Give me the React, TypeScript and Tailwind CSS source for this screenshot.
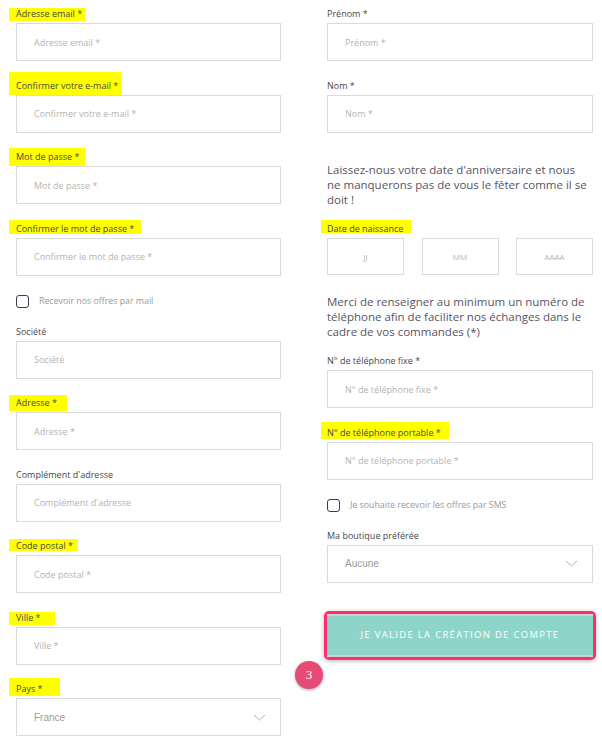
import React from 'react';

type FieldProps = { label: string; placeholder: string; hl?: string; last?: boolean };

function Label({ text, hl }: { text: string; hl?: string }) {
  return (
    <div className="flex h-[23px] items-start pt-[8px] text-[9px] leading-[12px]">
      <span className="relative z-0 block text-[#484848]">
        {hl && <span className={`absolute -z-10 bg-[#ffff00] ${hl}`} />}
        {text}
      </span>
    </div>
  );
}

function Field({ label, placeholder, hl, last }: FieldProps) {
  return (
    <div className={last ? '' : 'h-[71.5px]'}>
      <Label text={label} hl={hl} />
      <input
        placeholder={placeholder}
        className="h-[38px] w-full border border-[#dadada] bg-white pl-[17px] text-[9px] outline-none placeholder:text-[#b3b3b3]"
      />
    </div>
  );
}

function SelectBox({ value }: { value: string }) {
  return (
    <div className="flex h-[38px] w-full items-center justify-between border border-[#dadada] bg-white pl-[17px] pr-[14px]">
      <span className="font-['Liberation_Sans',sans-serif] text-[10px] text-[#9a9a9a]">{value}</span>
      <svg width="13" height="7" viewBox="0 0 13 7" fill="none">
        <polyline points="1,1 6.5,6 12,1" stroke="#b0b0b0" strokeWidth="1" />
      </svg>
    </div>
  );
}

function Check({ text }: { text: string }) {
  return (
    <div className="flex h-[31.5px] items-center gap-[10px]">
      <span className="h-[13px] w-[13px] shrink-0 rounded-[3px] border-[1.5px] border-[#3e3b4f]" />
      <span className="text-[8.8px] text-[#9a9a9a]">{text}</span>
    </div>
  );
}

export default function App() {
  return (
    <div className="relative flex h-[741px] w-[602px] gap-[46px] overflow-hidden bg-white pl-[16px] font-['Open_Sans',sans-serif]">
      {/* colonne gauche */}
      <div className="flex w-[265px] flex-col">
        <Field label="Adresse email *" placeholder="Adresse email *" hl="-left-[7px] w-[76px] top-0 h-[13px]" />
        <Field label="Confirmer votre e-mail *" placeholder="Confirmer votre e-mail *" hl="-left-[7px] w-[113px] -top-[7.5px] h-[23px]" />
        <Field label="Mot de passe *" placeholder="Mot de passe *" hl="-left-[7px] w-[76px] -top-[3px] h-[18px]" />
        <Field label="Confirmer le mot de passe *" placeholder="Confirmer le mot de passe *" hl="-left-[7px] w-[132px] -top-[2.5px] h-[14px]" />
        <Check text="Recevoir nos offres par mail" />
        <Field label="Société" placeholder="Société" />
        <Field label="Adresse *" placeholder="Adresse *" hl="-left-[7px] w-[58px] -top-[2.5px] h-[16px]" />
        <Field label="Complément d'adresse" placeholder="Complément d'adresse" />
        <Field label="Code postal *" placeholder="Code postal *" hl="-left-[7px] w-[69px] -top-[1.5px] h-[12px]" />
        <Field label="Ville *" placeholder="Ville *" hl="-left-[7px] w-[46px] top-0 h-[13px]" />
        <div>
          <Label text="Pays *" hl="-left-[7px] w-[51px] -top-[5.5px] h-[18px]" />
          <SelectBox value="France" />
        </div>
      </div>

      {/* colonne droite */}
      <div className="flex w-[266px] flex-col">
        <Field label="Prénom *" placeholder="Prénom *" />
        <Field label="Nom *" placeholder="Nom *" />

        <p className="mt-[19px] text-[11.5px] leading-[15px] text-[#57535f]">
          Laissez-nous votre date d'anniversaire et nous
          <br />
          ne manquerons pas de vous le fêter comme il se
          <br />
          doit !
        </p>

        <div className="mt-[8px]">
          <Label text="Date de naissance" hl="-left-[6px] w-[90px] -top-[3px] h-[13px]" />
          <div className="flex justify-between">
            {['JJ', 'MM', 'AAAA'].map((p) => (
              <input
                key={p}
                placeholder={p}
                className="h-[37px] w-[77px] border border-[#dadada] text-center text-[8px] outline-none placeholder:text-[#b3b3b3]"
              />
            ))}
          </div>
        </div>

        <p className="mt-[19px] text-[11.5px] leading-[15px] text-[#57535f]">
          Merci de renseigner au minimum un numéro de
          <br />
          téléphone afin de faciliter nos échanges dans le
          <br />
          cadre de vos commandes (*)
        </p>

        <div className="mt-[8px]">
          <Field label="N° de téléphone fixe *" placeholder="N° de téléphone fixe *" />
          <Field label="N° de téléphone portable *" placeholder="N° de téléphone portable *" hl="-left-[6px] w-[128px] -top-[4.5px] h-[17px]" />
        </div>
        <Check text="Je souhaite recevoir les offres par SMS" />
        <div>
          <Label text="Ma boutique préférée" />
          <SelectBox value="Aucune" />
        </div>

        <div className="-mx-[3px] mt-[28px] rounded-[5px] border-[3px] border-[#ff2d6a] shadow-[0_1px_4px_rgba(0,0,0,0.3)]">
          <button className="flex h-[43px] w-full items-center justify-center border-y-2 border-[#c9d2d0] bg-[#8fd4c8] text-[9.5px] font-medium tracking-[1.3px] text-white">
            JE VALIDE LA CRÉATION DE COMPTE
          </button>
        </div>
      </div>

      {/* pastille d'annotation */}
      <div className="absolute left-[295px] top-[661px] flex h-[28px] w-[28px] items-center justify-center rounded-full bg-[#e84a76] font-['Liberation_Serif',serif] text-[13px] text-white shadow-[0_1px_3px_rgba(0,0,0,0.35)]">
        3
      </div>
    </div>
  );
}
